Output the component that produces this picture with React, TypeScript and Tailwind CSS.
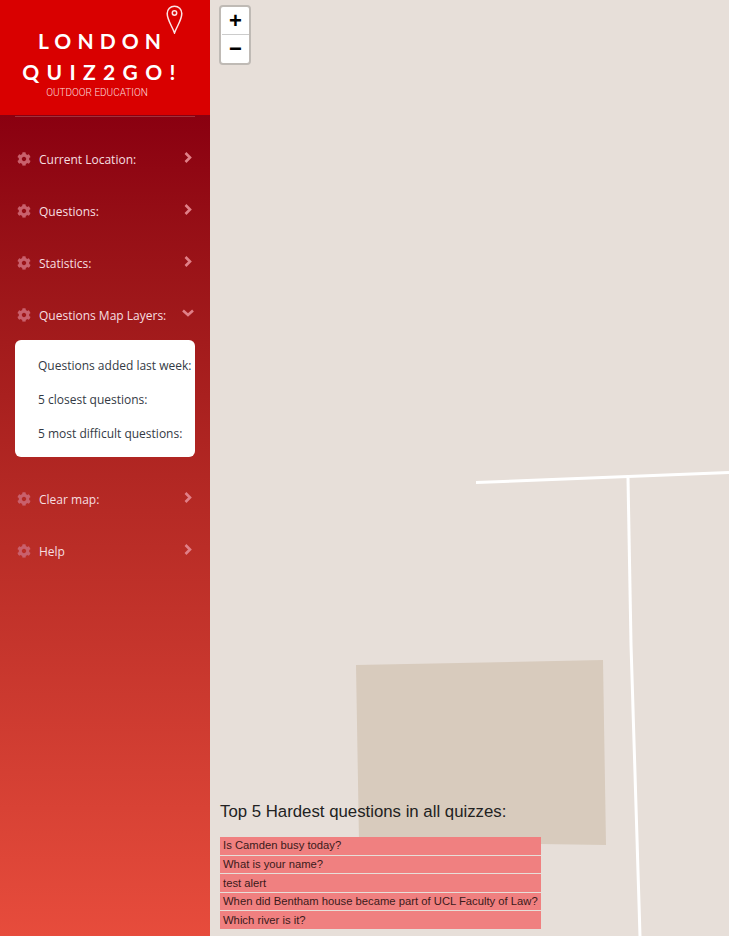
import { FaCog } from 'react-icons/fa';

const hardest = [
  'Is Camden busy today?',
  'What is your name?',
  'test alert',
  'When did Bentham house became part of UCL Faculty of Law?',
  'Which river is it?',
];

function NavRow({ label, open }: { label: string; open?: boolean }) {
  return (
    <div className="relative flex h-[52px] items-center pl-[17px] text-[12px] text-[#f6dfe0]">
      <FaCog size={14} className="-mt-[2px] shrink-0 text-[#c9606c]" />
      <span className="ml-[8px] flex-1">{label}</span>
      {open ? (
        <svg className="mr-[16px] -mt-[7px]" width="12" height="8" viewBox="0 0 12 8" fill="none" stroke="#e08088" strokeWidth="2.6">
          <path d="M1 1.500 L6 6 L11 1.500" />
        </svg>
      ) : (
        <svg className="mr-[18px] -mt-[6px]" width="8" height="11" viewBox="0 0 8 11" fill="none" stroke="#e08088" strokeWidth="2.6">
          <path d="M1.500 1 L6 5.500 L1.500 10" />
        </svg>
      )}
    </div>
  );
}

function Logo() {
  return (
    <div className="relative h-[115px] bg-[#d90000] pr-[17px] text-center text-white">
      <svg className="absolute left-[166px] top-[5px]" width="17" height="29" viewBox="0 0 17 29" fill="none" stroke="#fbe4e4" strokeWidth="1.5">
        <path d="M8.500 28 C6 21 1.200 15 1.200 8.600 C1.200 4.200 4.400 1.200 8.500 1.200 C12.600 1.200 15.800 4.200 15.800 8.600 C15.800 15 11 21 8.500 28 Z" />
        <circle cx="8.500" cy="8" r="2.200" />
      </svg>
      <div className="pt-[29px] pl-[12px] font-['Lato',sans-serif] text-[21px] leading-[24px] font-bold tracking-[0.29em]">LONDON</div>
      <div className="pt-[7px] pl-[12px] font-['Lato',sans-serif] text-[21px] leading-[24px] font-bold tracking-[0.35em]">QUIZ2GO!</div>
      <div className="pt-[2px] pl-[1px] font-['Roboto',sans-serif] text-[10px] leading-[14px] font-light text-[#fcdcdc]">OUTDOOR EDUCATION</div>
    </div>
  );
}

export default function App() {
  return (
    <div className="flex h-[936px] w-[729px] overflow-hidden font-['Open_Sans',sans-serif]">
      {/* 사이드바 */}
      <aside className="flex h-full w-[210px] shrink-0 flex-col">
        <Logo />
        <nav className="flex-1 bg-gradient-to-b from-[#8a0010] to-[#e74c3c] pt-[18px]">
          <div className="mx-[15px] -mt-[17px] mb-[17px] h-px bg-[#a3303a]" />
          <NavRow label="Current Location:" />
          <NavRow label="Questions:" />
          <NavRow label="Statistics:" />
          <NavRow label="Questions Map Layers:" open />
          <div className="mx-[15px] -mt-[2px] mb-[17px] flex h-[117px] flex-col justify-center rounded-[6px] bg-white pt-[2px] pl-[23px] text-[12px] text-[#333a45]">
            <div className="flex h-[34px] items-center whitespace-nowrap">Questions added last week:</div>
            <div className="flex h-[34px] items-center whitespace-nowrap">5 closest questions:</div>
            <div className="flex h-[34px] items-center whitespace-nowrap">5 most difficult questions:</div>
          </div>
          <NavRow label="Clear map:" />
          <NavRow label="Help" />
        </nav>
      </aside>

      {/* 지도 */}
      <main className="relative h-full flex-1 overflow-hidden bg-[#e7dfd9]">
        <svg className="absolute inset-0 h-full w-full" viewBox="0 0 519 936" fill="none">
          <path d="M146 665 L393 660 L396 845 L149 841 Z" fill="#d8cbbd" />
          <path d="M266 482.500 L519 472.500" stroke="white" strokeWidth="3" />
          <path d="M418 478 L421 644" stroke="white" strokeWidth="3" />
          <path d="M421 644 L430 936" stroke="white" strokeWidth="3" />
        </svg>

        <div className="absolute left-[9px] top-[5px] w-[32px] overflow-hidden rounded-[4px] border-2 border-[#bfbab5] bg-white pl-px font-['Liberation_Sans',sans-serif] text-black">
          <div className="flex h-[28px] items-center justify-center border-b border-[#ccc] text-[22px] leading-none font-bold">+</div>
          <div className="flex h-[28px] items-center justify-center text-[22px] leading-none font-bold">−</div>
        </div>

        <div className="absolute bottom-[7px] left-[10px] font-['Liberation_Sans',sans-serif] text-[#222]">
          <div className="mb-[15px] text-[16.8px] leading-[20px]">Top 5 Hardest questions in all quizzes:</div>
          <div className="flex w-[321px] flex-col gap-px">
            {hardest.map((q) => (
              <div key={q} className="flex h-[17.6px] items-center bg-[#f08080] pl-[3px] text-[11.25px] whitespace-nowrap text-[#3a1a1a]">
                {q}
              </div>
            ))}
          </div>
        </div>
      </main>
    </div>
  );
}
